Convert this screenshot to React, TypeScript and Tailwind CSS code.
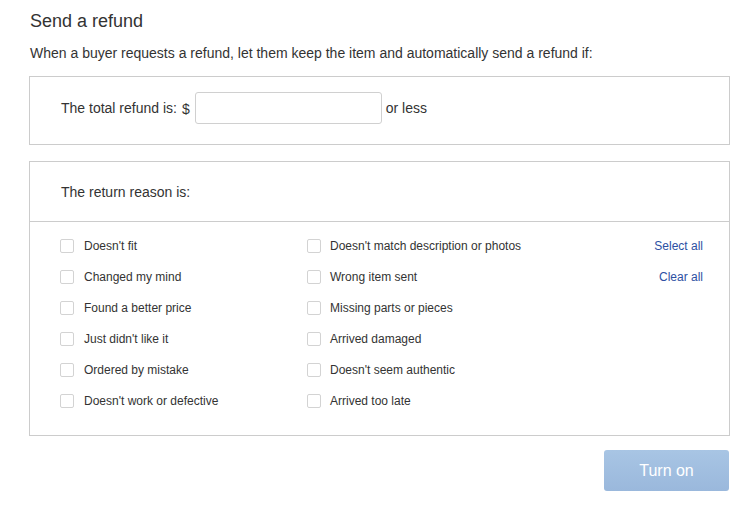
import React from "react";

const left = [
  "Doesn't fit",
  "Changed my mind",
  "Found a better price",
  "Just didn't like it",
  "Ordered by mistake",
  "Doesn't work or defective",
];
const right = [
  "Doesn't match description or photos",
  "Wrong item sent",
  "Missing parts or pieces",
  "Arrived damaged",
  "Doesn't seem authentic",
  "Arrived too late",
];

function Box() {
  return <span className="block w-[14px] h-[14px] shrink-0 border border-[#d3d3d3] rounded-[2px] bg-white" />;
}

export default function App() {
  return (
    <div className="w-[755px] h-[509px] bg-white text-[#333333] font-['Liberation_Sans',Arial,sans-serif]">
      <div className="ml-[29px] w-[701px] pt-[10px]">
        <h1 className="text-[18px] leading-[22px] pl-[1px]">Send a refund</h1>
        <p className="text-[14px] leading-[18px] mt-[12px] pl-[1px]">
          When a buyer requests a refund, let them keep the item and automatically send a refund if:
        </p>
        <div className="mt-[14px] border border-[#cccccc] pl-[31px] pt-[15px] pb-[20px] flex items-center text-[14px]">
          <span>The total refund is:</span>
          <span className="ml-[5px] mt-[2px]">$</span>
          <input className="ml-[5px] w-[187px] h-[32px] border border-[#d0d0d0] rounded-[3px] outline-none px-2" />
          <span className="ml-[4px]">or less</span>
        </div>
        <div className="mt-[16px] border border-[#cccccc]">
          <div className="h-[60px] flex items-center pl-[31px] pt-[1px] text-[14px] border-b border-[#cccccc]">
            The return reason is:
          </div>
          <div className="flex pt-[8px] pb-[19px] pl-[30px] pr-[26px] text-[12px]">
            <div className="w-[247px] flex flex-col">
              {left.map((t) => (
                <div key={t} className="h-[31px] flex items-center gap-[10px]">
                  <Box />
                  <span>{t}</span>
                </div>
              ))}
            </div>
            <div className="flex-1 flex flex-col">
              {right.map((t) => (
                <div key={t} className="h-[31px] flex items-center gap-[9px]">
                  <Box />
                  <span>{t}</span>
                </div>
              ))}
            </div>
            <div className="flex flex-col items-end text-[#2d50a3]">
              <div className="h-[31px] flex items-center">Select all</div>
              <div className="h-[31px] flex items-center">Clear all</div>
            </div>
          </div>
        </div>
        <div className="flex justify-end mt-[14px]">
          <button className="w-[125px] h-[41px] rounded-[3px] bg-gradient-to-b from-[#a8c5e4] to-[#9ab8dc] text-white text-[16px] mr-[1px]">
            Turn on
          </button>
        </div>
      </div>
    </div>
  );
}
